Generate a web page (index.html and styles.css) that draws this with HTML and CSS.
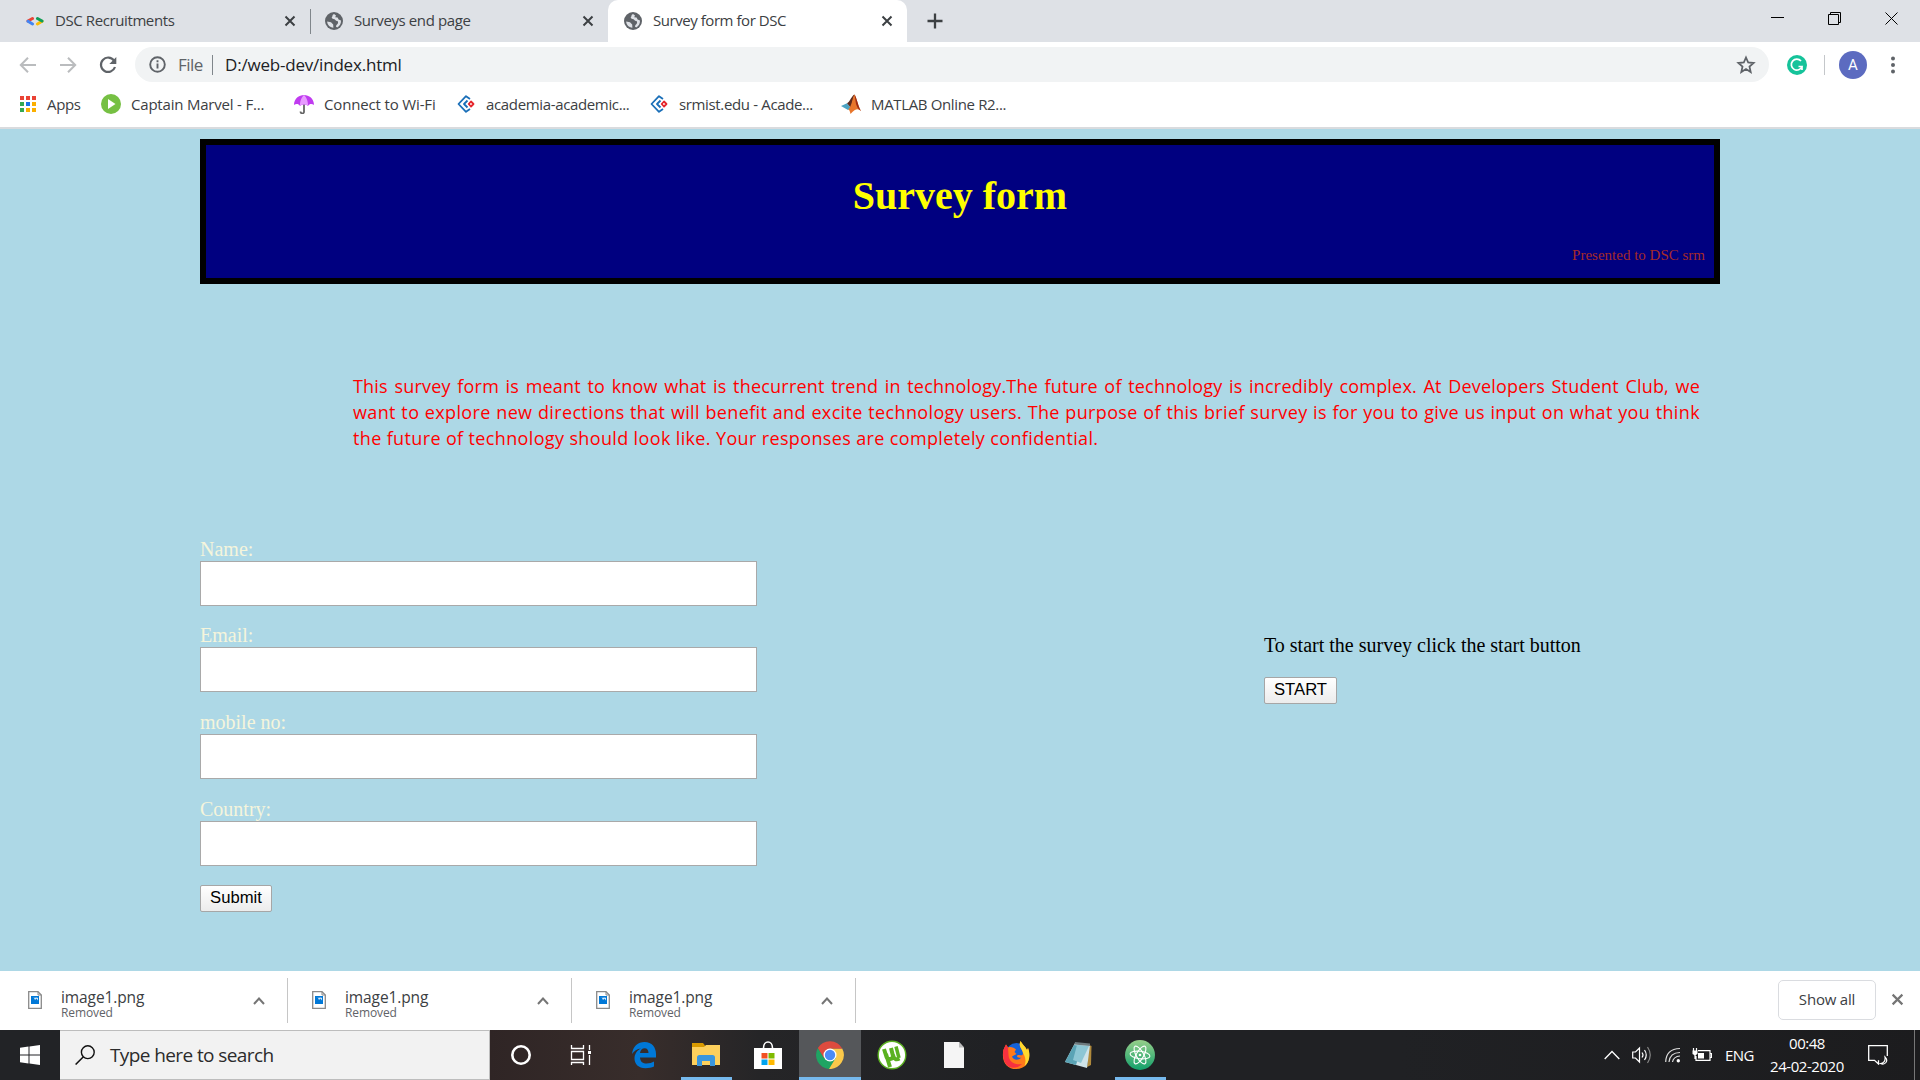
FILE: index.html
```html
<!DOCTYPE html>
<html lang="en">
<head>
<meta charset="utf-8">
<title>Survey form for DSC</title>
<link rel="stylesheet" href="styles.css">
</head>
<body>
<svg class="defs" width="0" height="0">
  <symbol id="globe" viewBox="0 0 18 18"><circle cx="9" cy="9" r="9" fill="#5f6368"/><path d="M2.200 9.600 6 10.200 8.200 12.400 8.400 15.800C4.800 15.500 2.200 12.800 2.200 9.600ZM9 2.100C6.800 3.200 8 4.600 6.600 5.800 7.200 7.400 9.600 6.800 10.400 8 11.400 9.400 13.600 8.600 13 11 12.600 12.600 11.400 12.400 10.900 14.600L12.200 15.400C14.600 14.200 16.200 11.800 16 8.600L13.600 7.600 12.600 5.400 10.200 5.200 11 3.400Z" fill="#dee1e6"/></symbol>
  <symbol id="x" viewBox="0 0 12 12"><path d="M1.500 1.500 10.500 10.500M10.500 1.500 1.500 10.500" stroke="currentColor" stroke-width="2" fill="none"/></symbol>
  <symbol id="zoho" viewBox="0 0 18 18"><path d="M13 4 9 1.200 1.500 9 9 16.800 13 14M10.500 5.500 7 9 10.500 12.500" fill="none" stroke="#1a6fb8" stroke-width="1.800" stroke-linejoin="round"/><path d="M14 6.500 16.500 9 14 11.500 11.700 9Z" fill="none" stroke="#e5252c" stroke-width="1.800" stroke-linejoin="round"/></symbol>
  <symbol id="pic" viewBox="0 0 14 18"><path d="M.7.700H10L13.300 4V17.300H.7Z" fill="#fff" stroke="#8a8a8a" stroke-width="1.300"/><path d="M10 .7V4H13.300" fill="none" stroke="#8a8a8a"/><path d="M3 5H11V13H3Z" fill="#0078d7"/><path d="M4 7H6L7 9 8.500 7.500 10 9.500V7L9 6.500Z" fill="#d9ecfb"/></symbol>
  <symbol id="up" viewBox="0 0 12 8"><path d="M1 7 6 1.500 11 7" fill="none" stroke="#757575" stroke-width="2"/></symbol>
</svg>

<header class="tabstrip">
  <div class="tab tab-first">
    <svg class="fav" viewBox="0 0 18 18"><g fill="none" stroke-width="3" stroke-linecap="round"><path d="M6.500 6.500 2 9" stroke="#ea4335"/><path d="M2 9.300 6.500 12" stroke="#4285f4"/><path d="M11.500 12 16 9.300" stroke="#fbbc04"/><path d="M11.500 6.500 16 9" stroke="#0f9d58"/></g></svg>
    <span class="tab-title t1">DSC Recruitments</span><svg class="tab-x"><use href="#x"/></svg>
  </div>
  <div class="tab tab-second">
    <svg class="fav"><use href="#globe"/></svg>
    <span class="tab-title t2">Surveys end page</span><svg class="tab-x"><use href="#x"/></svg>
  </div>
  <div class="tab tab-active">
    <svg class="fav"><use href="#globe"/></svg>
    <span class="tab-title t3">Survey form for DSC</span><svg class="tab-x"><use href="#x"/></svg>
  </div>
  <svg class="newtab" viewBox="0 0 16 16"><path d="M8 .5V15.500M.5 8H15.500" stroke="#3c4043" stroke-width="2.300"/></svg>
  <div class="wincontrols">
    <svg viewBox="0 0 14 14"><path d="M0 5.500H13" stroke="#000"/></svg>
    <svg viewBox="0 0 14 14"><path d="M.5 2.500H10.500V12.500H.5ZM2.500 2.500V.5H12.500V10.500H10.500" fill="none" stroke="#000"/></svg>
    <svg viewBox="0 0 14 14"><path d="M.5.500 12.500 12.500M12.500.500.5 12.500" stroke="#000"/></svg>
  </div>
</header>

<nav class="toolbar">
  <svg class="nav-icon back" viewBox="0 0 18 18"><path d="M17 9H2M9 1.800 1.800 9 9 16.200" fill="none" stroke="#babcbe" stroke-width="2"/></svg>
  <svg class="nav-icon fwd" viewBox="0 0 18 18"><path d="M1 9H16M9 1.800 16.200 9 9 16.200" fill="none" stroke="#babcbe" stroke-width="2"/></svg>
  <svg class="nav-icon reload" viewBox="0 0 18 18"><path d="M15 4.500A7.200 7.200 0 1 0 16 11" fill="none" stroke="#5f6368" stroke-width="2.200"/><path d="M17.300 1V8H10.300Z" fill="#5f6368"/></svg>
  <div class="omnibox">
    <svg class="info" viewBox="0 0 17 17"><circle cx="8.500" cy="8.500" r="7.300" fill="none" stroke="#5f6368" stroke-width="1.900"/><path d="M8.500 7.500V12.500M8.500 4.300V6.200" stroke="#5f6368" stroke-width="1.900"/></svg>
    <span class="scheme">File</span><i class="bar"></i><span class="url">D:/web-dev/index.html</span>
    <svg class="star" viewBox="0 0 20 20"><path d="M10 2.500 12.200 7.500 17.600 8 13.500 11.600 14.700 17 10 14.100 5.300 17 6.500 11.600 2.400 8 7.800 7.500Z" fill="none" stroke="#5f6368" stroke-width="1.800"/></svg>
  </div>
  <svg class="gram" viewBox="0 0 20 20"><circle cx="10" cy="10" r="10" fill="#15c39a"/><path d="M14 6A5.500 5.500 0 1 0 15 11.500H11.500M15 11V15" fill="none" stroke="#fff" stroke-width="1.700"/></svg>
  <i class="tool-divider"></i>
  <span class="avatar">A</span>
  <svg class="dots" viewBox="0 0 4 18"><g fill="#5f6368"><circle cx="2" cy="2.500" r="2"/><circle cx="2" cy="9" r="2"/><circle cx="2" cy="15.500" r="2"/></g></svg>
</nav>

<nav class="bookmarks">
  <a class="bm b1"><svg viewBox="0 0 18 18"><path d="M1 1H5V5H1ZM7 1H11V5H7ZM13 1H17V5H13Z" fill="#ea4335"/><path d="M1 7H5V11H1ZM1 13H5V17H1Z" fill="#34a853"/><path d="M7 7H11V11H7Z" fill="#1a73e8"/><path d="M13 7H17V11H13ZM7 13H11V17H7ZM13 13H17V17H13Z" fill="#fbaf00"/></svg><span>Apps</span></a>
  <a class="bm b2"><svg viewBox="0 0 20 20"><circle cx="10" cy="10" r="10" fill="#76c043"/><path d="M7 5 14.500 10 7 15Z" fill="#fff"/></svg><span>Captain Marvel - F...</span></a>
  <a class="bm b3"><svg viewBox="0 0 20 20"><path d="M10 2V18C10 20 6.500 20 6.500 17.500" fill="none" stroke="#666" stroke-width="1.800"/><path d="M0 11C0-2.500 20-2.500 20 11 18 9.500 15.500 9.500 14 12 12 10 8 10 6 12 4.500 9.500 2 9.500 0 11Z" fill="#c03bf0"/><path d="M6 11.500C6 6 8 3 10 1 12 3 14 6 14 11.500 12 10 8 10 6 11.500Z" fill="#e79bff"/></svg><span>Connect to Wi-Fi</span></a>
  <a class="bm b4"><svg><use href="#zoho"/></svg><span>academia-academic...</span></a>
  <a class="bm b5"><svg><use href="#zoho"/></svg><span>srmist.edu - Acade...</span></a>
  <a class="bm b6"><svg viewBox="0 0 20 20"><path d="M0 12 6 9.300 10 14 7 16Z" fill="#4ba3c3"/><path d="M6 9.300C9 8 11 1 13.500.5L10 14Z" fill="#5c2a1e"/><path d="M13.500.5C15.500 3 17 12 20 17 17 14.500 15 14 9.500 20 9 17 8 15 7 15.500 11 13 11 4 13.500.5Z" fill="#e8762c"/><path d="M13.500.5C15.500 3 17 12 20 17 17 15 16 13 15 10Z" fill="#9c2b16"/></svg><span>MATLAB Online R2...</span></a>
</nav>

<main class="page">
  <section class="banner">
    <h1>Survey form</h1>
    <p>Presented to DSC srm</p>
  </section>
  <div class="intro">
    <p class="l1">This survey form is meant to know what is thecurrent trend in technology.The future of technology is incredibly complex. At Developers Student Club, we</p>
    <p class="l2">want to explore new directions that will benefit and excite technology users. The purpose of this brief survey is for you to give us input on what you think</p>
    <p class="l3">the future of technology should look like. Your responses are completely confidential.</p>
  </div>
  <div class="columns">
    <form class="form">
      <label>Name:<input type="text"></label>
      <label>Email:<input type="text"></label>
      <label>mobile no:<input type="text"></label>
      <label>Country:<input type="text"></label>
      <button type="button" class="btn submit">Submit</button>
    </form>
    <aside class="start">
      <p>To start the survey click the start button</p>
      <button type="button" class="btn go">START</button>
    </aside>
  </div>
</main>

<section class="downloads">
  <div class="dl"><svg class="pic"><use href="#pic"/></svg><div class="dl-text"><b>image1.png</b><small>Removed</small></div><svg class="up"><use href="#up"/></svg></div>
  <div class="dl"><svg class="pic"><use href="#pic"/></svg><div class="dl-text"><b>image1.png</b><small>Removed</small></div><svg class="up"><use href="#up"/></svg></div>
  <div class="dl"><svg class="pic"><use href="#pic"/></svg><div class="dl-text"><b>image1.png</b><small>Removed</small></div><svg class="up"><use href="#up"/></svg></div>
  <button type="button" class="showall">Show all</button>
  <svg class="dl-x"><use href="#x"/></svg>
</section>

<footer class="taskbar">
  <div class="win"><svg viewBox="0 0 20 20"><path d="M0 2.800 8.500 1.600V9.500H0ZM9.500 1.400 20 0V9.500H9.500ZM0 10.500H8.500V18.400L0 17.200ZM9.500 10.500H20V20L9.500 18.600Z" fill="#fff"/></svg></div>
  <div class="search"><svg viewBox="0 0 20 20"><circle cx="12.800" cy="7.200" r="6.400" fill="none" stroke="#111" stroke-width="1.400"/><path d="M8.400 11.800.6 19.500" stroke="#111" stroke-width="1.500"/></svg><span>Type here to search</span></div>
  <div class="apps">
  <div class="app"><svg viewBox="0 0 28 28"><circle cx="14" cy="14" r="8.700" fill="none" stroke="#fff" stroke-width="2.600"/></svg></div>
  <div class="app shift"><svg viewBox="0 0 28 28"><path d="M4.500 4V7.500H16.500V4M4.500 10.500H16.500V18.500H4.500ZM4.500 24V21.500H16.500V24M22.500 4V9M22.500 14V24" fill="none" stroke="#fff" stroke-width="1.300"/><path d="M21 10H24V13H21Z" fill="#fff"/></svg></div>
  <div class="app"><svg viewBox="0 0 28 28"><path d="M2 13C3 5 8 1 14.500 1 22 1 26 6.500 26 13V16.500H10C10.300 21 13 22.500 16.500 22.500 19.500 22.500 22 21.700 24 20.500V25.500C21.500 26.700 19 27.200 15.500 27.200 8.500 27.200 4.500 23 4.500 17.500 4.500 13 7 9.500 11 7.500 7 7.800 4 10 2 13ZM10 12H18.500C18.500 8.700 17 7.200 14.700 7.200 12 7.200 10.500 9 10 12Z" fill="#0078d7"/></svg></div>
  <div class="app open"><svg viewBox="0 0 28 28"><path d="M0 2H11L13 4.500V8H0Z" fill="#d99a00"/><path d="M0 6H12L14 4H28V24H0Z" fill="#fdd05c"/><path d="M5 25V16.500Q5 14 7.500 14H20.500Q23 14 23 16.500V25H18V20H10V25Z" fill="#3a96dd"/></svg></div>
  <div class="app"><svg viewBox="0 0 28 28"><path d="M9.500 7C9.500-1 18.500-1 18.500 7" fill="none" stroke="#fff" stroke-width="1.600"/><path d="M0 7H28V28H0Z" fill="#fff"/><path d="M7.500 12H13.500V17.500H7.500Z" fill="#f25022"/><path d="M14.500 12H20.500V17.500H14.500Z" fill="#7fba00"/><path d="M7.500 18.500H13.500V24H7.500Z" fill="#00a4ef"/><path d="M14.500 18.500H20.500V24H14.500Z" fill="#ffb900"/></svg></div>
  <div class="app current"><svg viewBox="0 0 28 28"><path d="M14 14 14 7.500H26.200A14 14 0 0 1 13 28Z" fill="#fbc94a"/><path d="M14 14 8 17 1.900 7A14 14 0 0 0 13 28L19.700 17Z" fill="#1fa463"/><path d="M1.900 7A14 14 0 0 1 26.200 7.500H14L8 17Z" fill="#dd4b3e"/><circle cx="14" cy="14" r="6.500" fill="#fff"/><circle cx="14" cy="14" r="5.200" fill="#4c8bf5"/></svg></div>
  <div class="app"><svg class="big" viewBox="0 0 30 30"><circle cx="15" cy="15" r="13.800" fill="#fff" stroke="#5bb120" stroke-width="1.400"/><path d="M7 9 9.500 17C10.500 20 16 19.500 16 16L14 8M16 15C17 20.500 20.500 19.500 22.500 18.500M9 14 13 27" fill="none" stroke="#5bb120" stroke-width="4"/><path d="M19 6.500 22 18" fill="none" stroke="#5bb120" stroke-width="3.500"/></svg></div>
  <div class="app"><svg viewBox="0 0 28 28"><path d="M4 1H19L24 6.500V27H4Z" fill="#f5f5f5"/><path d="M19 1V6.500H24Z" fill="#bbb"/></svg></div>
  <div class="app"><svg viewBox="0 0 28 28"><circle cx="14.500" cy="12.500" r="10.500" fill="#1462d8"/><path d="M1 12C1 8 3 6 4 3.500L6 6.500C9 5.500 12 6.500 14 8.500L12.500 11 14.500 13 10 15.500C11 19 16 20 19.500 16.500 15 17.500 14 15 16 14 19 13.500 20.500 16 21 12 20.500 8 16 6 18.500 0 20 3 23 5 25 9L26 7C29 15 27 28 14 28 6 28 0 22 1 12Z" fill="#ff7a1a"/><path d="M1 12C1 8 3 6 4 3.500L6 6.500 6.500 14C7 22 14 24 20 23 16 28 1 31 1 12Z" fill="#f8313f"/><path d="M18.500 0C20 3 23 5 25 9L26 7C29 14 27 22 22.500 25 25 18 22 14 21 12 20.500 8 16 6 18.500 0Z" fill="#ffd92e"/></svg></div>
  <div class="app"><svg viewBox="0 0 28 28"><path d="M25 4 27.500 5 27 24 23 26Z" fill="#b08a3c"/><path d="M11 2 26 4 23 27 1 21Z" fill="#cfe3e8"/><path d="M10 4 18 5 12 24 1 21Z" fill="#5aa3b5"/><path d="M13 4 25 5 17 22 9 19Z" fill="#8dc6d4"/><path d="M11 1 26 2.500V5L10.500 3.500Z" fill="#6d7a7e"/></svg></div>
  <div class="app open"><svg class="big" viewBox="0 0 30 30"><defs><linearGradient id="atomfill" x2="0" y2="1"><stop stop-color="#97cf8a"/><stop offset="1" stop-color="#12a06b"/></linearGradient></defs><circle cx="15" cy="15" r="15" fill="url(#atomfill)"/><g fill="none" stroke="#fff" stroke-width="1.100"><ellipse cx="15" cy="15" rx="3.700" ry="10" transform="rotate(-30 15 15)"/><ellipse cx="15" cy="15" rx="3.700" ry="10" transform="rotate(30 15 15)"/><ellipse cx="15" cy="15" rx="3.700" ry="10" transform="rotate(97 15 15)"/></g><circle cx="15" cy="15" r="1.300" fill="#fff"/></svg></div>
  </div>
  <div class="tray">
    <svg class="t-up" viewBox="0 0 16 10"><path d="M.7 9 8 1.500 15.300 9" fill="none" stroke="#fff" stroke-width="1.300"/></svg>
    <svg class="t-vol" viewBox="0 0 20 20"><path d="M.7 7H3.500L7.500 3V17L3.500 13H.7ZM10 7.500Q12 10 10 12.500M12.500 5Q16 10 12.500 15" fill="none" stroke="#fff" stroke-width="1.200"/><path d="M15.500 2Q21 10 15.500 18" fill="none" stroke="#888" stroke-width="1.200"/></svg>
    <svg class="t-wifi" viewBox="0 0 16 16"><g fill="none" stroke="#ddd" stroke-width="1.200"><path d="M.7 15Q1 2 15 1.500M4 15Q5 5.500 15 5.500M7.500 15Q8.500 9.500 15 9"/></g><circle cx="13.300" cy="13.800" r="1.700" fill="#fff"/></svg>
    <svg class="t-bat" viewBox="0 0 20 14"><path d="M6 2.700H18V12.300H4V8M18.500 5.500H19.500V9.500H18.500M1.500 0V3M4.500 0V3M3 6V11" fill="none" stroke="#fff" stroke-width="1.200"/><path d="M.5 2.500H5.500V6L3 7.500.5 6ZM6 5H12V10.500H6Z" fill="#fff"/></svg>
    <span class="lang">ENG</span>
    <div class="clock"><span class="time">00:48</span><span class="date">24-02-2020</span></div>
    <svg class="t-note" viewBox="0 0 20 20"><path d="M19.300 11V.7H.7V15.300H6.500L10.500 19V15.300" fill="none" stroke="#fff" stroke-width="1.300"/><path d="M17 12C21 16 17 20.500 12.500 18.500 16 18 17.500 15.500 17 12Z" fill="none" stroke="#fff" stroke-width="1.200"/></svg>
  </div>
</footer>
</body>
</html>
```
FILE: styles.css
```css
* { box-sizing: border-box; }
body { margin: 0; width: 1920px; height: 1080px; overflow: hidden; display: flex; flex-direction: column; background: #fff; font-family: "Open Sans", sans-serif; color: #3c4043; }
p, h1 { margin: 0; }
svg { display: block; flex: none; }
.defs { position: absolute; }

/* Tab strip */
.tabstrip { height: 42px; flex: none; display: flex; align-items: center; background: #dee1e6; }
.tab { height: 42px; display: flex; align-items: center; padding-left: 16px; white-space: nowrap; }
.tab-first { width: 311px; padding-left: 26px; background: linear-gradient(#80868b, #80868b) right 0 center / 1px 25px no-repeat; }
.tab-second { width: 297px; padding-left: 14px; }
.tab-active { width: 299px; background: #fff; border-radius: 10px 10px 0 0; color: #3c4043; }
.fav { width: 18px; height: 18px; margin-right: 11px; }
.tab-title { font-size: 15px; line-height: 20px; flex: 1; letter-spacing: -0.4px; padding-bottom: 2px; }
.t3 { letter-spacing: -0.45px; }
.tab-x { width: 12px; height: 12px; margin-right: 15px; color: #3c4043; }
.tab-second .tab-x { margin-right: 14px; }
.tab-active .tab-x { margin-right: 14px; }
.newtab { width: 16px; height: 16px; margin-left: 20px; }
.wincontrols { margin-left: auto; display: flex; gap: 43px; padding: 0 21px 4px 0; }
.wincontrols svg { width: 14px; height: 14px; }

/* Toolbar */
.toolbar { height: 46px; flex: none; display: flex; align-items: center; padding: 0 0 1px 19px; }
.nav-icon { width: 18px; height: 18px; }
.fwd { margin-left: 22px; }
.reload { margin-left: 22px; }
.omnibox { width: 1634px; height: 35px; margin-left: 18px; border-radius: 18px; background: #f1f3f4; display: flex; align-items: center; padding-left: 14px; font-size: 17px; line-height: 24px; white-space: nowrap; }
.info { width: 17px; height: 17px; }
.scheme { width: 25px; margin-left: 12px; color: #5f6368; letter-spacing: -0.5px; }
.bar { width: 1px; height: 20px; margin: 0 12px 0 9px; background: #80868b; }
.url { color: #202124; letter-spacing: -0.2px; }
.star { width: 20px; height: 20px; margin: 0 13px 0 auto; }
.gram { width: 20px; height: 20px; margin-left: 18px; }
.tool-divider { width: 1px; height: 20px; margin-left: 17px; background: #c4c7ca; }
.avatar { width: 28px; height: 28px; margin-left: 14px; border-radius: 50%; background: #5c6bc0; color: #fff; font: 15px/28px Roboto, sans-serif; text-align: center; }
.dots { width: 4px; height: 18px; margin-left: 24px; }

/* Bookmarks */
.bookmarks { height: 41px; flex: none; display: flex; align-items: center; padding: 0 0 7px 19px; border-bottom: 2px solid #d9dbde; }
.bm { display: flex; align-items: center; gap: 10px; white-space: nowrap; font-size: 15px; line-height: 20px; letter-spacing: -0.35px; }
.bm svg { width: 20px; height: 20px; }
.b1 { width: 82px; gap: 10px; }
.b1 svg, .b4 svg, .b5 svg { width: 18px; height: 18px; }
.b2 { width: 193px; letter-spacing: -0.2px; }
.b3 { width: 163px; letter-spacing: -0.15px; }
.b4, .b5 { width: 193px; gap: 11px; }
.b5 { width: 191px; }

/* Survey page */
.page { height: 842px; flex: none; background: #add8e6; padding: 10px 200px 0; font: 20px/23px "Liberation Serif", serif; }
.banner { height: 145px; border: 6px solid #000; background: #000080; padding: 28px 9px 0; }
.banner h1 { font-size: 40px; line-height: 46px; color: #ff0; text-align: center; }
.banner p { margin-top: 27px; font-size: 15px; line-height: 18px; color: #a52a2a; text-align: right; }
.intro { width: 1347px; margin: 89px 0 0 153px; color: #f00; font: 18px/26px "Comic Sans MS", "Open Sans", sans-serif; letter-spacing: 0.360px; white-space: nowrap; }
.l1, .l2 { text-align: justify; text-align-last: justify; }
.l1 { letter-spacing: 0.200px; }
.columns { display: flex; margin-top: 87px; }
.form { width: 1064px; color: beige; }
.form label { display: block; height: 87px; }
.form label:first-child { height: 86px; }
.form input { display: block; width: 557px; height: 45px; border: 1px solid #a9a9a9; background: #fff; }
.btn { display: block; height: 27px; padding: 0 0 2px; border: 1px solid #a6a6a6; border-radius: 2px; background: linear-gradient(#fff, #ececec); color: #000; font: 16.670px/22px "Liberation Sans", sans-serif; text-align: center; }
.submit { width: 72px; padding-bottom: 1px; }
.go { width: 73px; margin-top: 20px; }
.start { padding-top: 96px; color: #000; }

/* Downloads shelf */
.downloads { height: 59px; flex: none; display: flex; align-items: center; background: #fff; }
.dl { width: 284px; height: 45px; display: flex; align-items: center; padding: 0 22px 0 28px; border-right: 1px solid #c6c6c6; }
.dl:first-child { width: 288px; }
.pic { width: 14px; height: 18px; margin: 0 19px 2px 0; }
.dl-text { flex: 1; display: flex; flex-direction: column; padding-top: 7px; }
.dl b { font-weight: 400; font-size: 15.500px; line-height: 17px; letter-spacing: -0.1px; }
.dl small { font-size: 12px; line-height: 14px; color: #5f6368; letter-spacing: -0.1px; }
.up { width: 12px; height: 8px; }
.dl:not(:first-child) { padding-left: 24px; }
.showall { width: 98px; height: 40px; margin: 0 0 2px auto; border: 1px solid #dadce0; border-radius: 5px; background: #fff; color: #3c4043; font: 500 15px/20px "Open Sans", sans-serif; padding: 0 0 2px; letter-spacing: -0.2px; }
.dl-x { width: 13px; height: 13px; margin: 0 16px 2px 15px; color: #757575; }

/* Taskbar */
.taskbar { height: 50px; flex: none; display: flex; background: linear-gradient(90deg, #222326 0, #222326 60px, #2f2525 490px, #382d2b 640px, #252527 760px, #202124 1000px, #202124 1400px, #1c1c1e 1920px); }
.win { width: 60px; display: grid; place-items: center; }
.win svg, .search svg { width: 20px; height: 20px; }
.search { width: 430px; height: 50px; display: flex; align-items: center; gap: 15px; padding-left: 15px; border: 1px solid #bdbdbd; border-left: 0; background: #f2f2f2; color: #2b2b2b; font-size: 19px; white-space: nowrap; letter-spacing: -0.6px; }
.apps { display: flex; margin-left: -1px; }
.app { width: 62px; display: grid; place-items: center; }
.app:first-child { padding-left: 1px; }
.app.shift { padding-right: 3px; }
.app svg { width: 28px; height: 28px; }
.app svg.big { width: 30px; height: 30px; }
.app.current { background: #55575a; box-shadow: inset 0 -3px #76b9ed; }
.app.open { background: linear-gradient(#76b9ed, #76b9ed) center bottom / 51px 3px no-repeat; }
.tray { margin-left: auto; height: 50px; width: 316px; display: flex; align-items: center; color: #fff; background: linear-gradient(#777, #777) right 5px top / 1px 50px no-repeat; }
.t-up { width: 16px; height: 10px; }
.t-vol { width: 20px; height: 20px; margin-left: 12px; }
.t-wifi { width: 16px; height: 16px; margin-left: 13px; }
.t-bat { width: 20px; height: 14px; margin-left: 11px; }
.lang { width: 30px; margin-left: 13px; font-size: 15px; letter-spacing: -0.6px; }
.clock { width: 92px; margin-left: 6px; display: flex; flex-direction: column; align-items: center; font-size: 15px; line-height: 23px; letter-spacing: -0.450px; }
.t-note { width: 20px; height: 20px; margin-left: 15px; }
```
